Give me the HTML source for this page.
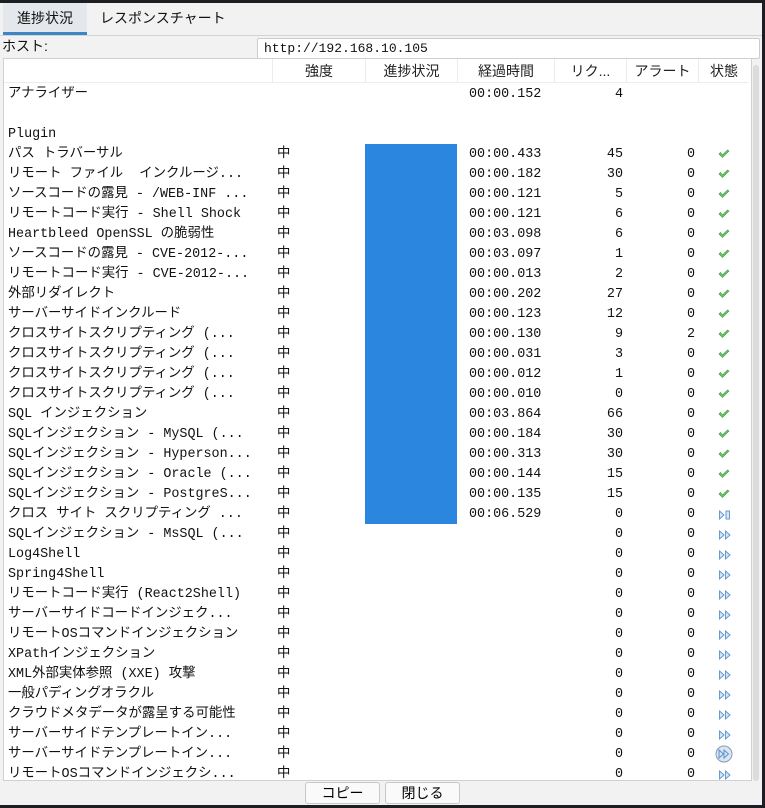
<!DOCTYPE html>
<html><head><meta charset="utf-8"><style>
*{margin:0;padding:0;box-sizing:border-box}
body{width:765px;height:808px;background:#1e1e22;position:relative;overflow:hidden;font-family:"Liberation Sans","Noto Sans CJK JP",sans-serif;}
#win{position:absolute;left:0;top:3px;width:762px;height:802px;background:#f2f2f2;}
.tab{position:absolute;top:0;height:32px;line-height:30px;font-size:14px;color:#111}
#t1{left:3px;width:84px;background:#e4e8ec;border-bottom:3px solid #3d86c6;text-align:center}
#t2{left:100px}
#host{position:absolute;top:32px;left:0;width:762px;height:24px;border-top:1px solid #d4d4d4;font-size:14px;line-height:20px;padding-left:2px;color:#111}
#hin{position:absolute;left:257px;top:2px;width:503px;height:21px;background:#fff;border:1px solid #ccc;border-radius:2px;font-family:"Liberation Mono",monospace;font-size:13px;line-height:19px;padding-left:6px}
#tbl{position:absolute;top:55px;left:3px;width:749px;height:723px;background:#fff;border:1px solid #d0d0d0;overflow:hidden}
#hdr{position:absolute;top:0;left:0;width:745px;height:24px;border-bottom:1px solid #ececec;font-size:14px;color:#222}
#hdr div{position:absolute;top:0;height:24px;line-height:24px;text-align:center;border-left:1px solid #ececec}
.r{position:absolute;left:0;width:745px;height:20px;font-family:"Liberation Mono","Noto Sans CJK JP",monospace;font-size:13.4px;line-height:20px;color:#111;white-space:pre}
.r span{position:absolute;top:1px}
.n{left:4px}.s{left:273px}.t{left:465px}.q{right:126px}.a{right:54px}
.bar{position:absolute;left:361px;top:0;width:92px;height:20px;background:#2a86de}
.ic{position:absolute;left:714px;top:5px}
#sb{position:absolute;left:753px;top:62px;width:6px;height:716px;background:#dcdcdc;border-radius:3px}
.btn{position:absolute;top:779px;height:22px;background:#fafafa;border:1px solid #c8c8c8;border-radius:3px;font-size:14px;text-align:center;line-height:20px}
</style></head><body><div id="win">
<div class="tab" id="t1">進捗状況</div><div class="tab" id="t2">レスポンスチャート</div>
<div id="host">ホスト:<div id="hin">http://192.168.10.105</div></div>
<div id="tbl">
<div id="hdr"><div style="left:268px;width:93px">強度</div><div style="left:361px;width:92px">進捗状況</div><div style="left:453px;width:97px">経過時間</div><div style="left:550px;width:72px">リク...</div><div style="left:622px;width:72px">アラート</div><div style="left:694px;width:51px">状態</div></div>
<div id="rows"></div>
</div>
<div id="sb"></div>
<div class="btn" style="left:305px;width:75px">コピー</div>
<div class="btn" style="left:385px;width:75px">閉じる</div>
</div>
<script>
var C='<svg class="ic" width="12" height="10" viewBox="0 0 12 10"><path d="M1 5 L4.5 8.5 L11 2 L9.5 1 L4.5 6 L2.5 3.5 Z" fill="#6cc86c" stroke="#3a9a3a" stroke-width=".6"/></svg>';
var P='<svg class="ic" width="14" height="12" viewBox="0 0 14 12"><path d="M1.5 2 L6 6 L1.5 10 Z M7.5 2 L12 6 L7.5 10 Z" fill="#d6e6f6" stroke="#5a92cc" stroke-width=".9"/></svg>';
var PP='<svg class="ic" width="14" height="12" viewBox="0 0 14 12"><path d="M1.5 2 L6 6 L1.5 10 Z" fill="#d6e6f6" stroke="#5a92cc" stroke-width=".9"/><rect x="8" y="2" width="3.5" height="8" fill="#d6e6f6" stroke="#5a92cc" stroke-width=".9"/></svg>';
var PC='<svg class="ic" style="left:711px;top:1px" width="18" height="18" viewBox="0 0 18 18"><circle cx="9" cy="9" r="8" fill="#dbe6f2" stroke="#8a9ab0"/><path d="M4 5 L8.5 9 L4 13 Z M9 5 L13.5 9 L9 13 Z" fill="#d6e6f6" stroke="#5a92cc"/></svg>';
var rows=[
['アナライザー','','','00:00.152','4','',''],['','','','','','',''],['Plugin','','','','','',''],
['パス トラバーサル','中',1,'00:00.433','45','0',C],
['リモート ファイル  インクルージ...','中',1,'00:00.182','30','0',C],
['ソースコードの露見 - /WEB-INF ...','中',1,'00:00.121','5','0',C],
['リモートコード実行 - Shell Shock','中',1,'00:00.121','6','0',C],
['Heartbleed OpenSSL の脆弱性','中',1,'00:03.098','6','0',C],
['ソースコードの露見 - CVE-2012-...','中',1,'00:03.097','1','0',C],
['リモートコード実行 - CVE-2012-...','中',1,'00:00.013','2','0',C],
['外部リダイレクト','中',1,'00:00.202','27','0',C],
['サーバーサイドインクルード','中',1,'00:00.123','12','0',C],
['クロスサイトスクリプティング (...','中',1,'00:00.130','9','2',C],
['クロスサイトスクリプティング (...','中',1,'00:00.031','3','0',C],
['クロスサイトスクリプティング (...','中',1,'00:00.012','1','0',C],
['クロスサイトスクリプティング (...','中',1,'00:00.010','0','0',C],
['SQL インジェクション','中',1,'00:03.864','66','0',C],
['SQLインジェクション - MySQL (...','中',1,'00:00.184','30','0',C],
['SQLインジェクション - Hyperson...','中',1,'00:00.313','30','0',C],
['SQLインジェクション - Oracle (...','中',1,'00:00.144','15','0',C],
['SQLインジェクション - PostgreS...','中',1,'00:00.135','15','0',C],
['クロス サイト スクリプティング ...','中',1,'00:06.529','0','0',PP],
['SQLインジェクション - MsSQL (...','中',0,'','0','0',P],
['Log4Shell','中',0,'','0','0',P],
['Spring4Shell','中',0,'','0','0',P],
['リモートコード実行 (React2Shell)','中',0,'','0','0',P],
['サーバーサイドコードインジェク...','中',0,'','0','0',P],
['リモートOSコマンドインジェクション','中',0,'','0','0',P],
['XPathインジェクション','中',0,'','0','0',P],
['XML外部実体参照 (XXE) 攻撃','中',0,'','0','0',P],
['一般パディングオラクル','中',0,'','0','0',P],
['クラウドメタデータが露呈する可能性','中',0,'','0','0',P],
['サーバーサイドテンプレートイン...','中',0,'','0','0',P],
['サーバーサイドテンプレートイン...','中',0,'','0','0',PC],
['リモートOSコマンドインジェクシ...','中',0,'','0','0',P]];
var h='';rows.forEach(function(r,i){var y=25+i*20;
h+='<div class="r" style="top:'+y+'px">'+(r[2]?'<div class="bar"></div>':'')+'<span class="n">'+r[0]+'</span><span class="s">'+r[1]+'</span><span class="t">'+r[3]+'</span><span class="q">'+r[4]+'</span><span class="a">'+r[5]+'</span>'+r[6]+'</div>';});
document.getElementById('rows').innerHTML=h;
</script>
</body></html>
